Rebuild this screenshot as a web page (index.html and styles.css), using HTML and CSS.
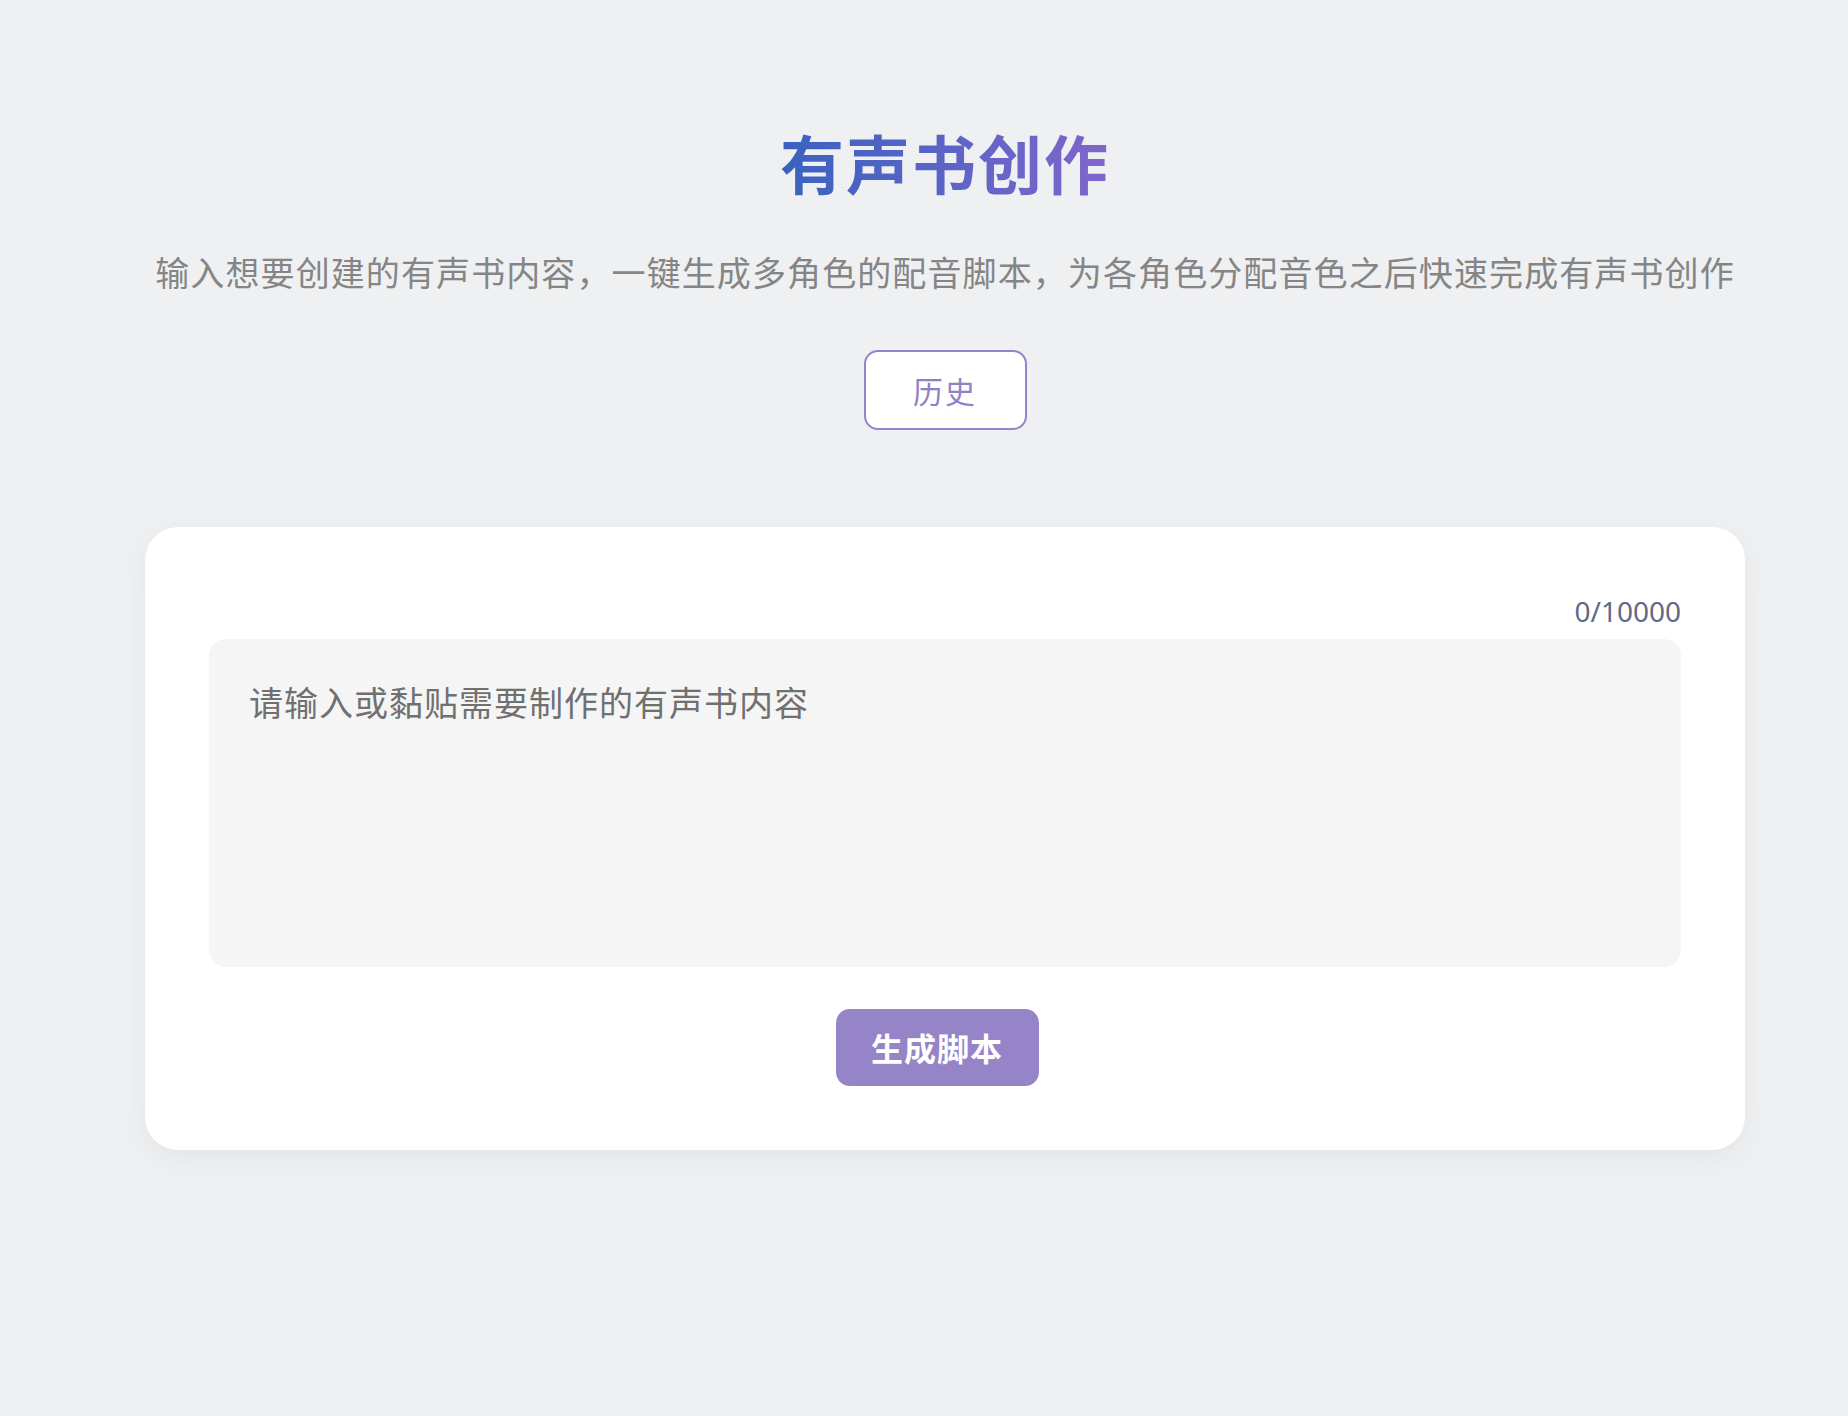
FILE: index.html
```
<!DOCTYPE html>
<html>
<head>
    <title>有声书创作</title>
    <meta charset="utf-8">
    <meta name="viewport" content="width=device-width, initial-scale=1">
    <link rel="stylesheet" href="styles.css">
</head>
<body>
    <div class="page">
        <!-- Header -->
        <div class="header">
            <h1 class="title">有声书创作</h1>
            <p class="subtitle">输入想要创建的有声书内容，一键生成多角色的配音脚本，为各角色分配音色之后快速完成有声书创作</p>
            <button class="history-btn">历史</button>
        </div>

        <!-- Input card -->
        <div class="card">
            <div class="counter"><span id="count">0</span>/10000</div>
            <textarea id="content" class="content-input" maxlength="10000" placeholder="请输入或黏贴需要制作的有声书内容"></textarea>
            <div class="actions">
                <button class="generate-btn">生成脚本</button>
            </div>
        </div>
    </div>

    <script>
        // Hitung jumlah karakter
        const content = document.getElementById('content');
        content.addEventListener('input', function () {
            document.getElementById('count').textContent = content.value.length;
        });
    </script>
</body>
</html>
```

FILE: styles.css
```
body {
    margin: 0;
    background-color: #eff0f2;
    font-family: "Noto Sans CJK SC", "Noto Sans", sans-serif;
}

.page {
    max-width: 1600px;
    margin: 0 auto;
    padding: 120px 0 200px 42px;
}

.header {
    display: flex;
    flex-direction: column;
    align-items: center;
}

.title {
    margin: 0;
    font-size: 64px;
    font-weight: bold;
    line-height: 1.3;
    letter-spacing: 2px;
    background: linear-gradient(90deg, #3a62c0 0%, #5b64c6 50%, #8066cc 100%);
    -webkit-background-clip: text;
    background-clip: text;
    color: transparent;
}

.subtitle {
    margin: 45px 0 0;
    font-size: 34px;
    line-height: 1.4;
    letter-spacing: 1.1px;
    color: #858585;
}

.history-btn {
    margin-top: 54px;
    width: 163px;
    height: 80px;
    background-color: white;
    border: 2px solid #9484cb;
    border-radius: 14px;
    color: #9080c8;
    font-family: inherit;
    font-size: 30px;
    letter-spacing: 2px;
    cursor: pointer;
}

.card {
    margin-top: 97px;
    background-color: white;
    border-radius: 33px;
    padding: 64px 64px 64px;
    box-shadow: 0 8px 30px rgba(0,0,0,0.05);
}

.counter {
    text-align: right;
    font-family: "Noto Sans", sans-serif;
    font-size: 28px;
    line-height: 40px;
    color: #5f6b85;
    margin-bottom: 8px;
}

.content-input {
    display: block;
    width: 100%;
    height: 328px;
    box-sizing: border-box;
    padding: 37px 40px;
    border: none;
    border-radius: 17px;
    background-color: #f5f5f5;
    font-family: inherit;
    font-size: 34px;
    line-height: 1.5;
    letter-spacing: 1px;
    color: #333;
    resize: none;
    outline: none;
}

.content-input::placeholder {
    color: #707070;
}

.actions {
    display: flex;
    justify-content: center;
    margin-top: 42px;
    padding-right: 16px;
}

.generate-btn {
    width: 203px;
    height: 77px;
    background-color: #9585c8;
    border: none;
    border-radius: 14px;
    color: white;
    font-family: inherit;
    font-size: 32px;
    font-weight: bold;
    letter-spacing: 1px;
    cursor: pointer;
}
```
